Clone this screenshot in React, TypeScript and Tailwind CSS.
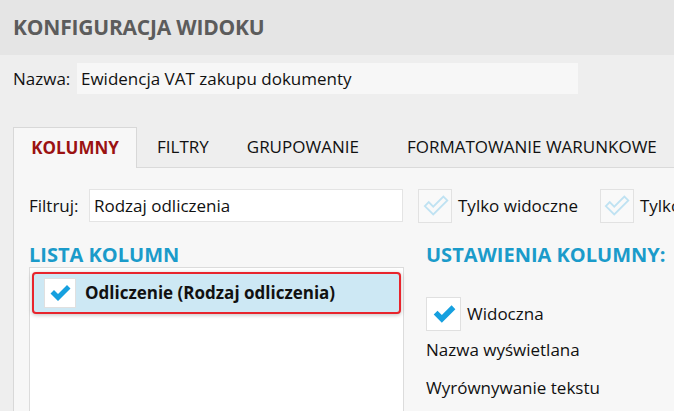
import React from "react";

const font = { fontFamily: '"Open Sans", "Noto Sans", "DejaVu Sans", sans-serif' };

function Check({ faded, size }: { faded?: boolean; size: number }) {
  const pts = "2.5,12.5 6,9 10,13 19,4 22.5,7.5 10,20";
  return (
    <svg width={size} height={size} viewBox="0 0 24 24">
      {faded ? (
        <polygon points={pts} fill="none" stroke="#bfe2f2" strokeWidth="1.6" strokeLinejoin="miter" />
      ) : (
        <polygon points={pts} fill="#16a0df" />
      )}
    </svg>
  );
}

export default function App() {
  return (
    <div className="w-[674px] h-[411px] overflow-hidden bg-[#eeeeee] text-[#111]" style={font}>
      <div className="h-[55px] bg-[#e5e5e5] flex items-center pl-[13px]">
        <span className="text-[21px] font-bold text-[#5c5c5c] tracking-[-0.2px]">KONFIGURACJA WIDOKU</span>
      </div>
      <div className="flex items-center mt-[8px] h-[31px] pl-[13px]">
        <span className="text-[17px] w-[64px]">Nazwa:</span>
        <div className="w-[501px] h-[31px] bg-[#f7f7f7] flex items-center pl-[4px] text-[17px]">
          Ewidencja VAT zakupu dokumenty
        </div>
      </div>
      <div className="mt-[33px] pl-[13px]">
        <div className="flex h-[41px] items-stretch border-b border-[#dadada]">
          <div className="w-[124px] shrink-0 border border-b-0 border-[#d8d8d8] bg-[#f7f7f7] flex items-center justify-center text-[17px] font-bold text-[#9b1212] -mb-px">
            KOLUMNY
          </div>
          <div className="flex items-center text-[17px] text-[#111] whitespace-nowrap">
            <span className="ml-[20px]">FILTRY</span>
            <span className="ml-[38px]">GRUPOWANIE</span>
            <span className="ml-[48px]">FORMATOWANIE WARUNKOWE</span>
          </div>
        </div>
        <div className="h-[260px] bg-[#f7f7f7] border-l border-[#d8d8d8] pl-[15px] pt-[21px]">
          <div className="flex items-center h-[33px]">
            <span className="text-[17px] w-[60px] shrink-0">Filtruj:</span>
            <div className="w-[314px] shrink-0 h-[33px] bg-white border border-[#e4e4e4] flex items-center pl-[4px] text-[17px]">
              Rodzaj odliczenia
            </div>
            <div className="ml-[15px] w-[34px] h-[34px] border border-[#e2e2e2] bg-[#f9f9f9] flex items-center justify-center shrink-0">
              <Check faded size={27} />
            </div>
            <span className="ml-[6px] text-[17px] whitespace-nowrap">Tylko widoczne</span>
            <div className="ml-[22px] w-[34px] h-[34px] border border-[#e2e2e2] bg-[#f9f9f9] flex items-center justify-center shrink-0">
              <Check faded size={27} />
            </div>
            <span className="ml-[6px] text-[17px] whitespace-nowrap">Tylko</span>
          </div>
          <div className="flex mt-[22px]">
            <div className="w-[375px] shrink-0">
              <div className="text-[20px] font-bold text-[#1b9bca] leading-[22px] h-[23px] whitespace-nowrap">LISTA KOLUMN</div>
              <div className="h-[200px] bg-white border border-[#dcdcdc] pt-[4px] px-[2px]">
                <div className="h-[42px] rounded-[4px] border-2 border-[#e8242c] bg-[#cde8f4] flex items-center pl-[10px] shadow-[0_1px_4px_rgba(0,0,0,0.25)]">
                  <div className="w-[32px] h-[30px] bg-white border border-[#e0e0e0] flex items-center justify-center">
                    <Check size={24} />
                  </div>
                  <span className="ml-[9px] text-[17px] font-bold whitespace-nowrap">Odliczenie (Rodzaj odliczenia)</span>
                </div>
              </div>
            </div>
            <div className="ml-[22px]">
              <div className="text-[20px] font-bold text-[#1b9bca] leading-[22px] whitespace-nowrap">USTAWIENIA KOLUMNY:</div>
              <div className="flex items-center mt-[31px]">
                <div className="w-[35px] h-[34px] bg-white border border-[#e0e0e0] flex items-center justify-center">
                  <Check size={26} />
                </div>
                <span className="ml-[6px] text-[17px]">Widoczna</span>
              </div>
              <div className="text-[17px] leading-[22px] mt-[8px] whitespace-nowrap">Nazwa wyświetlana</div>
              <div className="text-[17px] leading-[22px] mt-[16px] whitespace-nowrap">Wyrównywanie tekstu</div>
            </div>
          </div>
        </div>
      </div>
    </div>
  );
}
